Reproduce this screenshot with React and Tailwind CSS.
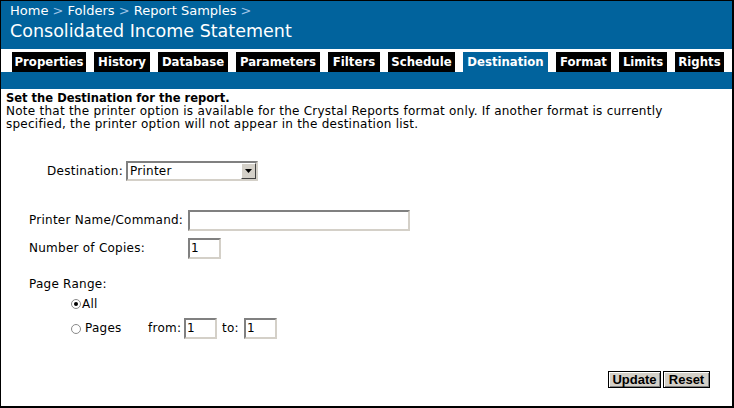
const tabs = [
  { label: "Properties", w: "w-[74px]" },
  { label: "History", w: "w-[56px]" },
  { label: "Database", w: "w-[70px]" },
  { label: "Parameters", w: "w-[84px]" },
  { label: "Filters", w: "w-[52px]" },
  { label: "Schedule", w: "w-[67px]" },
  { label: "Destination", w: "w-[85px]", active: true },
  { label: "Format", w: "w-[55px]" },
  { label: "Limits", w: "w-[48px]" },
  { label: "Rights", w: "w-[49px]" },
];

function TextBox({ className, value }) {
  return (
    <div
      className={`h-[21px] shrink-0 border-2 border-t-[#808080] border-l-[#808080] border-b-[#d4d0c8] border-r-[#d4d0c8] bg-white pl-[1px] leading-[17px] text-black ${className}`}
    >
      {value}
    </div>
  );
}

function Radio({ checked }) {
  return (
    <span className="flex h-[10px] w-[10px] shrink-0 items-center justify-center rounded-full border border-[#8a8a8a] bg-white">
      {checked && <span className="h-[4px] w-[4px] rounded-full bg-black" />}
    </span>
  );
}

export default function App() {
  const sep = <span className="text-[#9ec3e6]"> &gt; </span>;
  const btn =
    "h-[17px] border border-black bg-[#d4d0c8] font-['Liberation_Sans',sans-serif] text-[13px] font-bold leading-[15px] tracking-normal shadow-[inset_1px_1px_0_#fff,inset_-1px_-1px_0_#808080]";

  return (
    <div className="flex h-[408px] w-[734px] flex-col border-t border-l border-r-2 border-b-2 border-black bg-white font-['DejaVu_Sans',sans-serif] text-black">
      <div className="h-[48px] bg-[#01639d] px-[9px] pt-[2px] text-white">
        <div className="text-[13px] leading-[16px]">
          Home{sep}Folders{sep}Report Samples{sep}
        </div>
        <div className="text-[17.5px] leading-[24px]">Consolidated Income Statement</div>
      </div>

      <div className="flex h-[23px] gap-[8px] pl-[11px] pt-[3px] font-['DejaVu_Sans_Condensed','DejaVu_Sans',sans-serif]">
        {tabs.map((t) => (
          <div
            key={t.label}
            className={`${t.w} h-[20px] text-center text-[13px] font-bold leading-[20px] text-white ${
              t.active ? "bg-[#01639d]" : "bg-black"
            }`}
          >
            {t.label}
          </div>
        ))}
      </div>

      <div className="h-[17px] bg-[#01639d]" />

      <div className="flex flex-1 flex-col whitespace-nowrap px-[5px] pt-[2px] text-[12px] leading-[13px] tracking-[0.25px]">
        <div className="font-['DejaVu_Sans_Condensed','DejaVu_Sans',sans-serif] text-[12.8px] font-bold leading-[14px] tracking-normal">
          Set the Destination for the report.
        </div>
        <div>
          Note that the printer option is available for the Crystal Reports format only. If another format is currently
          <br />
          specified, the printer option will not appear in the destination list.
        </div>

        <div className="mt-[30px] flex items-center">
          <span className="w-[117px] shrink-0 text-right">Destination:</span>
          <div className="ml-[3px] flex h-[20px] w-[132px] shrink-0 items-center justify-between border-2 border-t-[#808080] border-l-[#808080] border-b-[#d4d0c8] border-r-[#d4d0c8] bg-white pl-[2px]">
            <span>Printer</span>
            <span className="flex h-[16px] w-[15px] items-center justify-center border border-t-white border-l-white border-b-[#404040] border-r-[#404040] bg-[#d4d0c8]">
              <svg width="7" height="4" viewBox="0 0 7 4">
                <path d="M0 0h7L3.5 4z" fill="#000" />
              </svg>
            </span>
          </div>
        </div>

        <div className="mt-[29px] flex items-center pl-[23px]">
          <span className="w-[159px] shrink-0">Printer Name/Command:</span>
          <TextBox className="w-[222px]" value="" />
        </div>

        <div className="mt-[7px] flex items-center pl-[23px]">
          <span className="w-[159px] shrink-0">Number of Copies:</span>
          <TextBox className="w-[33px]" value="1" />
        </div>

        <div className="mt-[17px] pl-[23px] leading-[16px]">Page Range:</div>

        <div className="mt-[4px] flex h-[16px] items-center pl-[65px]">
          <span className="w-[10px] shrink-0">
            <Radio checked />
          </span>
          <span className="ml-[1px]">All</span>
        </div>

        <div className="mt-[6px] flex h-[21px] items-center pl-[65px]">
          <span className="w-[10px] shrink-0">
            <Radio />
          </span>
          <span className="ml-[4px] w-[63px] shrink-0">Pages</span>
          <span className="w-[36px] shrink-0">from:</span>
          <TextBox className="w-[33px]" value="1" />
          <span className="ml-[5px] w-[22px] shrink-0">to:</span>
          <TextBox className="w-[33px]" value="1" />
        </div>

        <div className="mt-[32px] mr-[17px] flex justify-end gap-[2px]">
          <button className={`${btn} w-[53px]`}>Update</button>
          <button className={`${btn} w-[47px]`}>Reset</button>
        </div>
      </div>
    </div>
  );
}
